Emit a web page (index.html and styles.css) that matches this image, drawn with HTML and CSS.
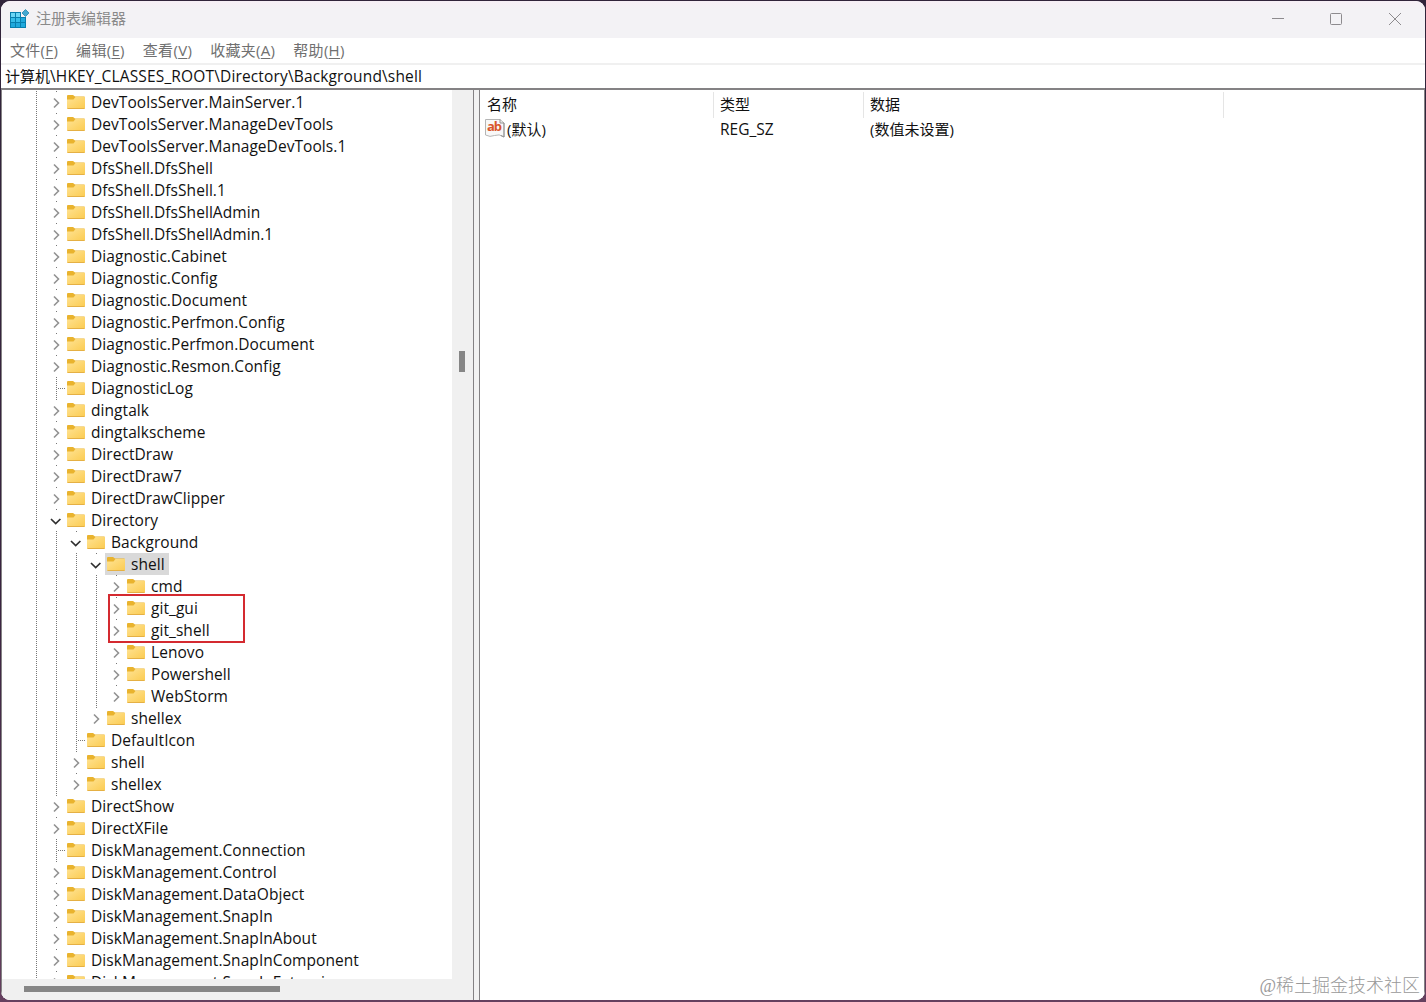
FILE: index.html
```html
<!DOCTYPE html>
<html lang="zh-CN">
<head>
    <meta charset="UTF-8">
    <title>注册表编辑器</title>
    <link rel="stylesheet" href="styles.css">
</head>
<body>
    <svg class="defs" width="0" height="0">
        <defs>
            <linearGradient id="folderFill" x1="0" y1="0" x2="1" y2="1">
                <stop offset="0" stop-color="#ffe394"/>
                <stop offset="1" stop-color="#fbcb50"/>
            </linearGradient>
        </defs>
        <symbol id="folder" viewBox="0 0 18 14">
            <path d="M0 1Q0 0 1 0H6L8 1.500H17Q18 1.500 18 2.500V6H0Z" fill="#e9b32e"/>
            <path d="M0 4.500H6.500L8.500 2H18V13Q18 14 17 14H1Q0 14 0 13Z" fill="url(#folderFill)"/>
            <path d="M.5 13.500H17.500" stroke="#e5b044"/>
        </symbol>
        <symbol id="closed" viewBox="0 0 20 22">
            <path d="M8 7.500L12.500 12L8 16.500" fill="none" stroke="#929292" stroke-width="1.600"/>
        </symbol>
        <symbol id="open" viewBox="0 0 20 22">
            <path d="M5 10L9.700 14.500L14.400 10" fill="none" stroke="#303030" stroke-width="1.700"/>
        </symbol>
    </svg>

    <div class="window">
        <header class="titlebar">
            <svg class="app-icon" width="20" height="20" viewBox="0 0 20 20">
                <path d="M0 3H11V8H16V19H0Z" fill="#087fae"/>
                <path d="M1 4H5V8H1ZM6 4H10V8H6Z" fill="#6bd6f5"/>
                <path d="M1 9H5V13H1ZM6 9H10V13H6Z" fill="#37bde8"/>
                <path d="M11 9H15V13H11ZM1 14H5V18H1ZM6 14H10V18H6ZM11 14H15V18H11Z" fill="#20a9dc"/>
                <path d="M15.500 .5L19 4L15.500 7.500L12 4Z" fill="#43a9d1" stroke="#2486ad" stroke-width=".8"/>
            </svg>
            <span class="title">注册表编辑器</span>
            <div class="controls">
                <svg width="58" height="36" viewBox="0 0 58 36"><path d="M24 17.500H36"/></svg>
                <svg width="58" height="36" viewBox="0 0 58 36"><rect x="23.500" y="12.500" width="11" height="11" rx="1"/></svg>
                <svg width="58" height="36" viewBox="0 0 58 36"><path d="M23 12L35 24M35 12L23 24"/></svg>
            </div>
        </header>
        <nav class="menu">
            <span>文件(<u>F</u>)</span>
            <span>编辑(<u>E</u>)</span>
            <span>查看(<u>V</u>)</span>
            <span>收藏夹(<u>A</u>)</span>
            <span>帮助(<u>H</u>)</span>
        </nav>
        <div class="address">计算机<span class="path">\HKEY_CLASSES_ROOT\Directory\Background\shell</span></div>

        <main class="panes">
            <section class="tree-pane">
                <div class="tree" id="tree"></div>
                <div class="vscroll"><div class="vthumb"></div></div>
                <div class="hscroll"><div class="hthumb"></div></div>
            </section>
            <section class="list-pane">
                <div class="row head">
                    <span class="first">名称</span><span>类型</span><span>数据</span>
                </div>
                <div class="row">
                    <span class="name">
                        <svg width="20" height="20" viewBox="0 0 20 20">
                            <path d="M.5 1.500H15L19 5V19Q14 15.500 9.500 17.500Q5 19.500 .5 17Z" fill="#f8f8f8" stroke="#b5b5b5"/>
                            <path d="M15 1.500V5H19M19 5V19L16 17.500" fill="none" stroke="#909090"/>
                            <text x="2" y="13" class="ab" textLength="15">ab</text>
                        </svg>(默认)</span>
                    <span class="type">REG_SZ</span>
                    <span>(数值未设置)</span>
                </div>
                <div class="watermark">@稀土掘金技术社区</div>
            </section>
        </main>
    </div>

    <script src="tree.js"></script>
</body>
</html>
```

FILE: styles.css
```css
* {
    box-sizing: border-box;
}
body {
    margin: 0;
    width: 1426px;
    height: 1002px;
    padding: 1px 1px 2px;
    overflow: hidden;
    background: linear-gradient(#30243a, #3a2440 60%, #65405f);
    font-family: "Open Sans", "Noto Sans CJK SC", sans-serif;
    font-size: 15px;
    font-kerning: none;
    color: #111;
}
.defs {
    position: absolute;
}
.window {
    display: flex;
    flex-direction: column;
    height: 999px;
    background: #fff;
    border-radius: 9px;
    overflow: hidden;
}
.titlebar {
    display: flex;
    align-items: center;
    height: 37px;
    flex: none;
    padding: 0 0 1px 9px;
    background: linear-gradient(#f6eff5, #f3f2f5 8px);
    color: #8a8a8a;
}
.title {
    margin-left: 6px;
    line-height: 34px;
    padding-bottom: 2px;
}
.controls {
    display: flex;
    margin-left: auto;
    margin-right: 1px;
}
.controls svg {
    fill: none;
    stroke: #8d8b8e;
    margin-left: 1px;
}
.menu {
    display: flex;
    gap: 18px;
    height: 27px;
    flex: none;
    padding-left: 9px;
    line-height: 25px;
    letter-spacing: .3px;
    color: #707070;
    border-bottom: 2px solid #f0f0f0;
}
.menu u {
    text-underline-offset: 2px;
}
.address {
    height: 25px;
    flex: none;
    padding-left: 4px;
    line-height: 23px;
    border-bottom: 2px solid #848284;
}
.path {
    font-size: 15.5px;
    letter-spacing: .15px;
}
.panes {
    display: flex;
    flex: 1;
    min-height: 0;
    background: #f2f2f2;
}
.tree-pane {
    display: grid;
    grid-template-columns: 450px 21px;
    grid-template-rows: 889px 1fr;
    width: 473px;
    border-left: 1px solid #848284;
    border-right: 1px solid #848284;
    background: #f0f0f0;
}
.tree {
    overflow: hidden;
    padding-top: 1px;
    background: #fff;
}
.node {
    display: flex;
    height: 22px;
    padding-left: 24px;
    font-size: 15.5px;
    line-height: 22px;
    letter-spacing: .06px;
    white-space: nowrap;
}
.cell {
    width: 20px;
    height: 22px;
    flex: none;
    background: repeating-linear-gradient(#777 0 1px, #fff 1px 2px) 10px 0 / 1px 100% no-repeat;
}
.cell.closed, .cell.open {
    background: linear-gradient(#777, #777) 10px 0 / 1px 1px no-repeat;
}
.cell.leaf {
    background:
        repeating-linear-gradient(#777 0 1px, #fff 1px 2px) 10px 0 / 1px 100% no-repeat,
        repeating-linear-gradient(90deg, #777 0 1px, #fff 1px 2px) 12px 11px / 8px 1px no-repeat;
}
.cell svg {
    display: block;
}
.item {
    display: flex;
    padding: 0 4px 0 1px;
}
.item svg {
    margin: 4px 6px 0 0;
}
.selected .item {
    background: #d9d9d9;
    margin-left: -1px;
    padding-left: 2px;
}
.marked {
    position: relative;
}
.marked::before {
    content: "";
    position: absolute;
    left: 106px;
    top: -3px;
    width: 133px;
    height: 45px;
    border: 2px solid #d42a30;
}
.vscroll {
    padding: 261px 0 0 7px;
}
.vthumb {
    width: 6px;
    height: 21px;
    background: #868686;
}
.hscroll {
    grid-column: 1 / 3;
    padding: 7px 0 0 22px;
}
.hthumb {
    width: 256px;
    height: 6px;
    background: #868686;
}
.list-pane {
    position: relative;
    flex: 1;
    margin-left: 5px;
    padding-top: 2px;
    background: #fff;
    border-left: 1px solid #848284;
    border-right: 1px solid #848284;
}
.row {
    display: grid;
    grid-template-columns: 234px 150px 360px;
    height: 26px;
    line-height: 25px;
}
.row + .row {
    line-height: 22px;
}
.row span {
    padding-left: 6px;
}
.row .first {
    padding-left: 7px;
}
.head span {
    border-right: 1px solid #e5e5e5;
}
.row .name {
    display: flex;
    gap: 2px;
    padding-left: 5px;
}
.type {
    font-size: 15.5px;
}
.ab {
    font: bold 13px "Open Sans", sans-serif;
    fill: #d9542b;
}
.watermark {
    position: absolute;
    right: 4px;
    bottom: 1px;
    font-family: "Liberation Serif", "Noto Sans CJK SC", serif;
    font-size: 18px;
    font-weight: 300;
    line-height: 26px;
    color: #999;
}
```

FILE: tree.js
```js
// [guides, state, label, extra class] - each "|" is a line left of the expander
const nodes = [
    ["|", "closed", "DevToolsServer.MainServer.1"],
    ["|", "closed", "DevToolsServer.ManageDevTools"],
    ["|", "closed", "DevToolsServer.ManageDevTools.1"],
    ["|", "closed", "DfsShell.DfsShell"],
    ["|", "closed", "DfsShell.DfsShell.1"],
    ["|", "closed", "DfsShell.DfsShellAdmin"],
    ["|", "closed", "DfsShell.DfsShellAdmin.1"],
    ["|", "closed", "Diagnostic.Cabinet"],
    ["|", "closed", "Diagnostic.Config"],
    ["|", "closed", "Diagnostic.Document"],
    ["|", "closed", "Diagnostic.Perfmon.Config"],
    ["|", "closed", "Diagnostic.Perfmon.Document"],
    ["|", "closed", "Diagnostic.Resmon.Config"],
    ["|", "leaf", "DiagnosticLog"],
    ["|", "closed", "dingtalk"],
    ["|", "closed", "dingtalkscheme"],
    ["|", "closed", "DirectDraw"],
    ["|", "closed", "DirectDraw7"],
    ["|", "closed", "DirectDrawClipper"],
    ["|", "open", "Directory"],
    ["||", "open", "Background"],
    ["|||", "open", "shell", "selected"],
    ["||||", "closed", "cmd"],
    ["||||", "closed", "git_gui", "marked"],
    ["||||", "closed", "git_shell"],
    ["||||", "closed", "Lenovo"],
    ["||||", "closed", "Powershell"],
    ["||||", "closed", "WebStorm"],
    ["|||", "closed", "shellex"],
    ["||", "leaf", "DefaultIcon"],
    ["||", "closed", "shell"],
    ["||", "closed", "shellex"],
    ["|", "closed", "DirectShow"],
    ["|", "closed", "DirectXFile"],
    ["|", "leaf", "DiskManagement.Connection"],
    ["|", "closed", "DiskManagement.Control"],
    ["|", "closed", "DiskManagement.DataObject"],
    ["|", "closed", "DiskManagement.SnapIn"],
    ["|", "closed", "DiskManagement.SnapInAbout"],
    ["|", "closed", "DiskManagement.SnapInComponent"],
    ["|", "closed", "DiskManagement.SnapInExtension"]
];

document.getElementById("tree").innerHTML = nodes.map(([guides, state, label, extra]) => {
    const lines = '<span class="cell"></span>'.repeat(guides.length);
    const arrow = state === "leaf" ? "" : `<svg width="20" height="22"><use href="#${state}"/></svg>`;
    return `<div class="node ${extra || ""}">${lines}<span class="cell ${state}">${arrow}</span>` +
        `<span class="item"><svg width="18" height="14"><use href="#folder"/></svg>${label}</span></div>`;
}).join("");
```
